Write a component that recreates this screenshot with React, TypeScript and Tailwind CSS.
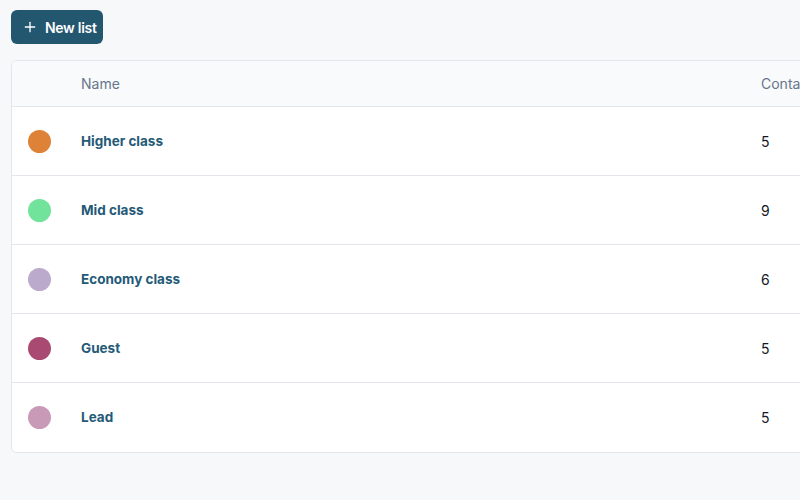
import React from "react";
import { Plus } from "lucide-react";

const lists = [
  { name: "Higher class", color: "bg-[#dd8237]", contacts: 5 },
  { name: "Mid class", color: "bg-[#72e39b]", contacts: 9 },
  { name: "Economy class", color: "bg-[#bbaacb]", contacts: 6 },
  { name: "Guest", color: "bg-[#a84a72]", contacts: 5 },
  { name: "Lead", color: "bg-[#c999b8]", contacts: 5 },
];

export default function App() {
  return (
    <div
      className="w-[800px] h-[500px] overflow-hidden bg-[#f7f8fa] pl-[11px] pt-[10px]"
      style={{ fontFamily: "Inter, 'Noto Sans', sans-serif" }}
    >
      {/* Toolbar */}
      <button className="flex items-center gap-[7px] h-[34px] w-[92px] pl-[11px] rounded-md bg-[#23566f] text-white text-[14px] font-semibold tracking-[-0.3px]">
        <Plus className="h-[16px] w-[16px]" strokeWidth={2} />
        New list
      </button>

      {/* Lists table */}
      <div className="mt-[16px] w-[1000px] rounded-md border border-[#e3e7ec] bg-white overflow-hidden">
        <div className="grid grid-cols-[69px_680px_1fr] h-[46px] items-center bg-[#f9fafb] border-b border-[#e3e7ec] text-[14px] text-[#67768c]">
          <div />
          <div>Name</div>
          <div>Contacts</div>
        </div>
        {lists.map((item, i) => (
          <div
            key={item.name}
            className={`grid grid-cols-[69px_680px_1fr] items-center h-[69px] ${
              i < lists.length - 1 ? "border-b border-[#e3e7ec]" : ""
            }`}
          >
            <div className="pl-[16px]">
              <div className={`h-[23px] w-[23px] rounded-full ${item.color}`} />
            </div>
            <div className="text-[13.5px] font-bold text-[#245a77]">{item.name}</div>
            <div className="text-[14px] text-[#111827]">{item.contacts}</div>
          </div>
        ))}
      </div>
    </div>
  );
}
